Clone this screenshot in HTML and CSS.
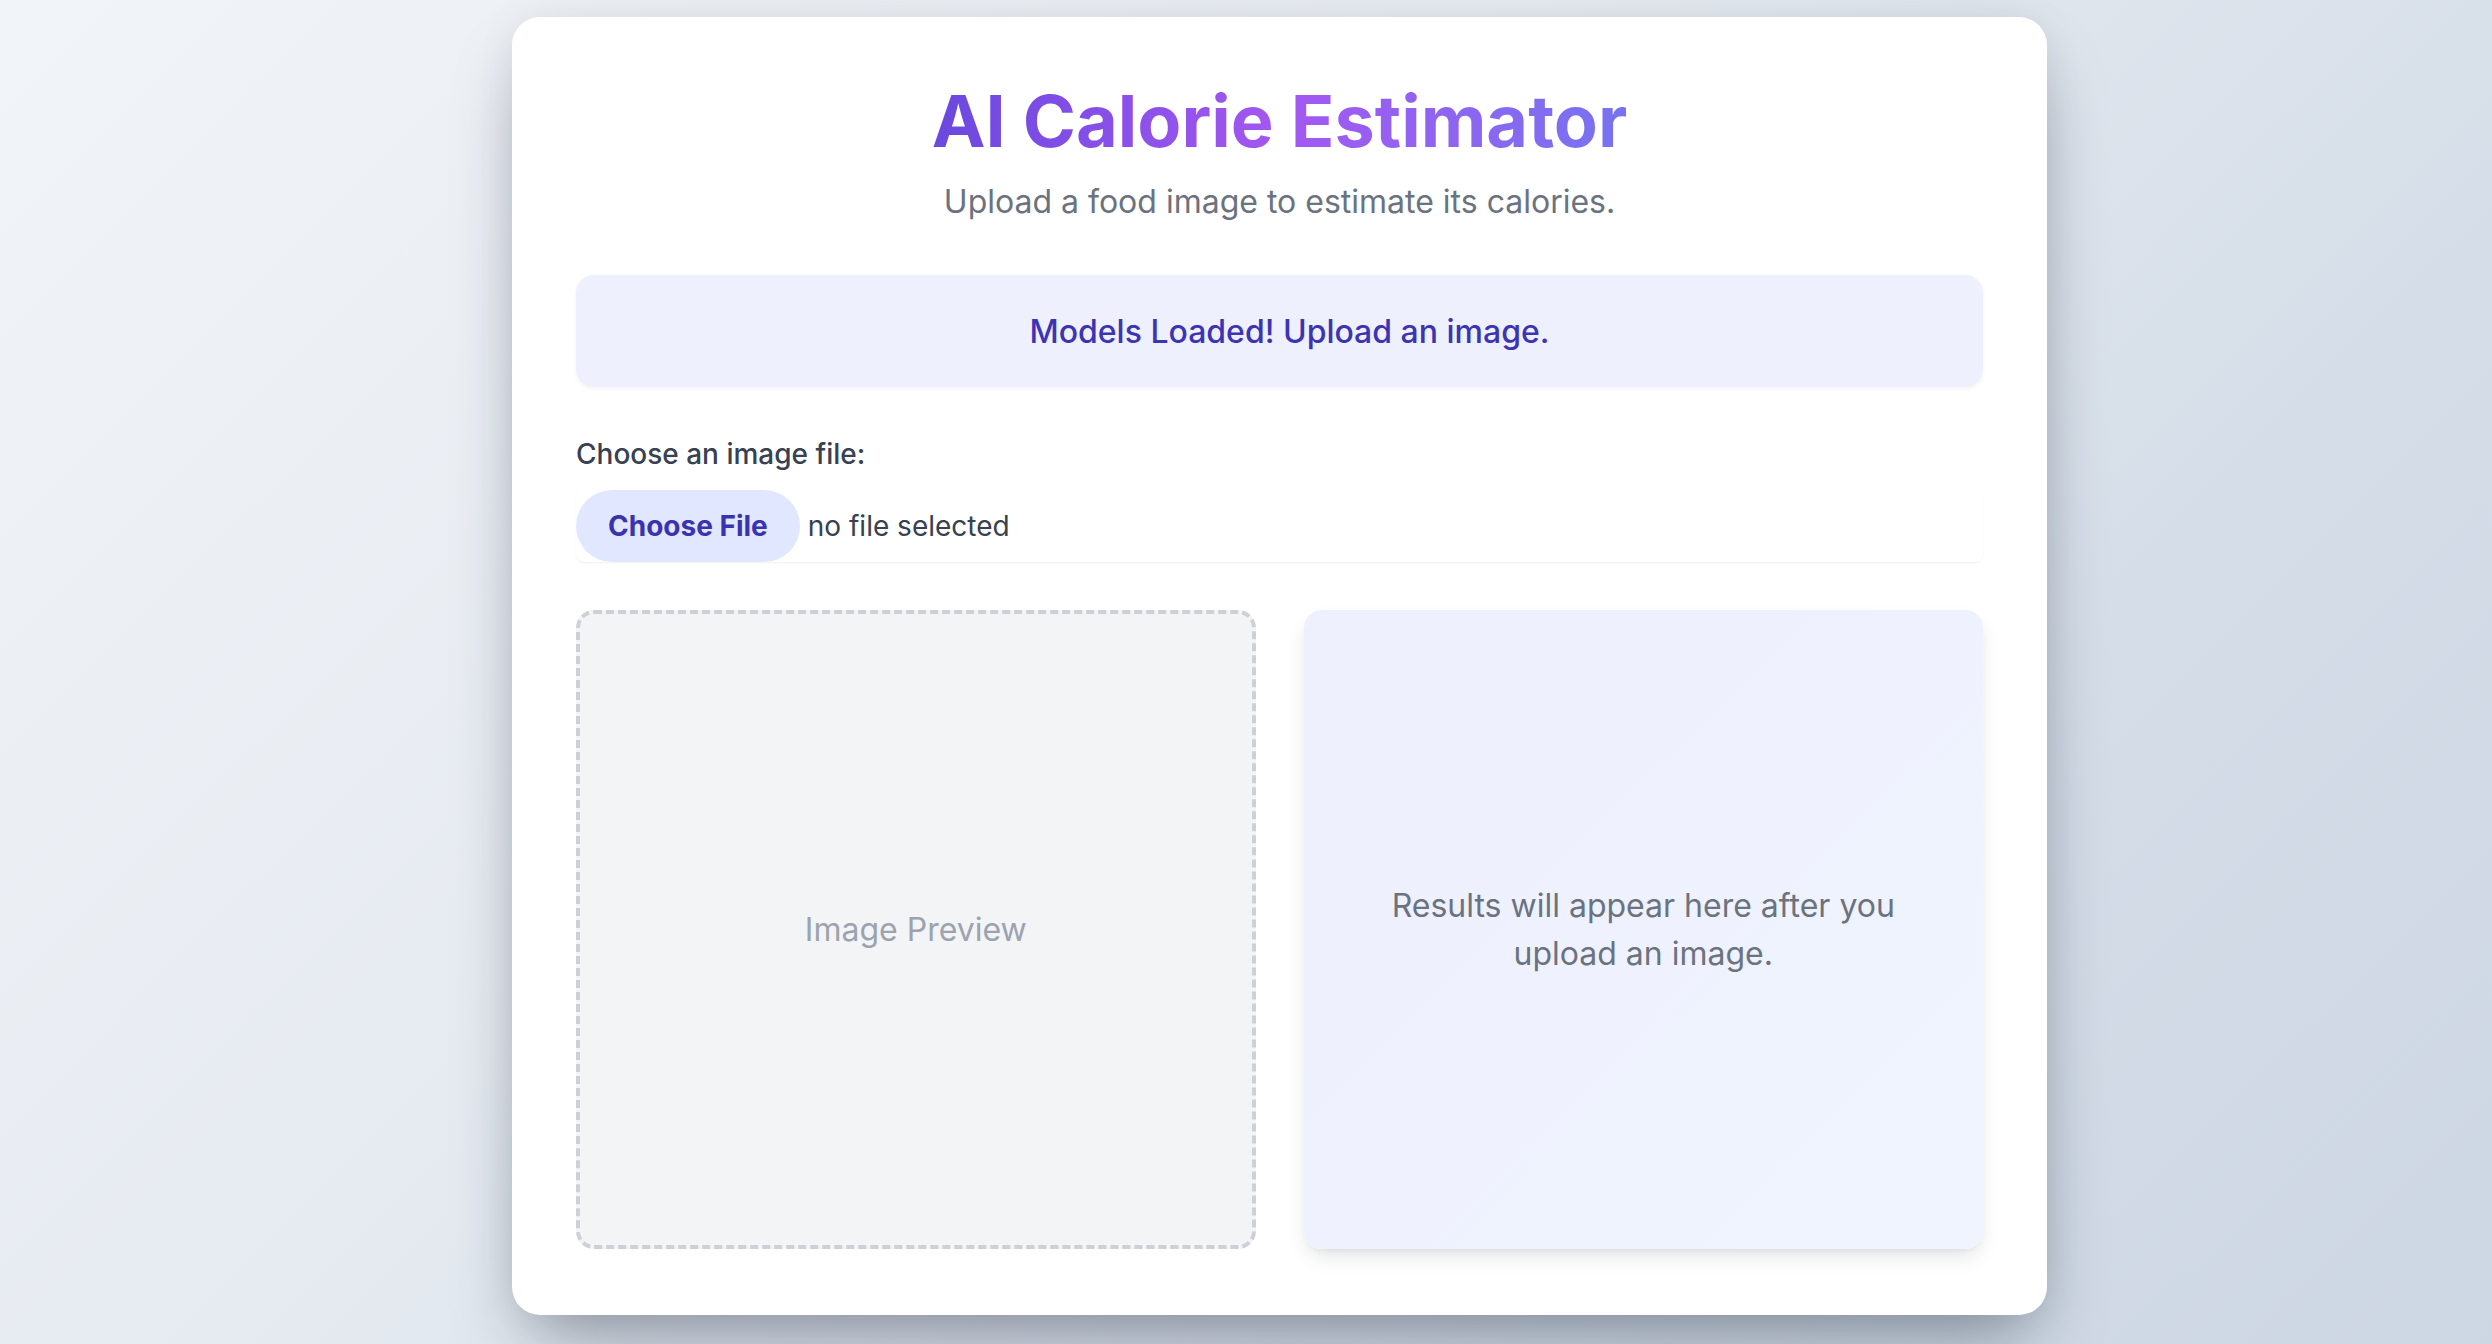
FILE: index.html
```html
<!DOCTYPE html>
<html lang="en">
<head>
<meta charset="utf-8">
<title>AI Calorie Estimator</title>
<link rel="stylesheet" href="styles.css">
</head>
<body>
<div class="page">
  <main class="card">
    <h1 class="title">AI Calorie Estimator</h1>
    <p class="subtitle">Upload a food image to estimate its calories.</p>

    <div class="status">Models Loaded! Upload an image.</div>

    <div class="field">
      <label class="field-label" for="file">Choose an image file:</label>
      <div class="file-input">
        <span class="file-btn">Choose File</span>
        <span class="file-name">no file selected</span>
      </div>
    </div>

    <div class="panels">
      <div class="preview">Image Preview</div>
      <div class="results">Results will appear here after you<br>upload an image.</div>
    </div>
  </main>
</div>
</body>
</html>
```
FILE: styles.css
```css
* { box-sizing: border-box; }

html, body {
  margin: 0;
  padding: 0;
}

body {
  min-height: 100vh;
  font-family: "Inter", "Noto Sans", "Liberation Sans", sans-serif;
  background: linear-gradient(135deg, #f1f4f8 0%, #e6ebf1 40%, #d3dce7 75%, #cdd7e3 100%);
  color: #374151;
}

.page {
  display: flex;
  justify-content: center;
  padding: 17px 0 17px 67px;
}

.card {
  width: 1535px;
  background: #ffffff;
  border-radius: 28px;
  padding: 64px 64px 66px;
  box-shadow: 0 38px 75px -18px rgba(15, 23, 42, 0.4), 0 0 40px rgba(15, 23, 42, 0.06);
}

.title {
  margin: 0 auto;
  width: fit-content;
  text-align: center;
  font-size: 72px;
  line-height: 80px;
  font-weight: 700;
  background: linear-gradient(90deg, #6a48df 0%, #a457f1 50%, #7773f0 100%);
  -webkit-background-clip: text;
  background-clip: text;
  color: transparent;
}

.subtitle {
  margin: 19px 0 0;
  text-align: center;
  font-size: 32px;
  line-height: 44px;
  color: #6b7280;
}

.status {
  margin-top: 51px;
  height: 112px;
  padding-left: 20px;
  display: flex;
  align-items: center;
  justify-content: center;
  background: #eef0fd;
  border-radius: 18px;
  box-shadow: 0 2px 4px rgba(15, 23, 42, 0.05);
  font-size: 32px;
  font-weight: 550;
  color: #3d34b4;
}

.field {
  margin-top: 47px;
}

.field-label {
  display: block;
  font-size: 28px;
  line-height: 40px;
  font-weight: 500;
  color: #374151;
}

.file-input {
  margin-top: 16px;
  display: flex;
  align-items: center;
  gap: 8px;
  background: #fff;
  border-radius: 8px;
  box-shadow: 0 1px 2px rgba(15, 23, 42, 0.06);
}

.file-btn {
  display: inline-flex;
  align-items: center;
  height: 72px;
  padding: 0 32px;
  border-radius: 36px;
  background: #e0e7ff;
  color: #3a33b0;
  font-size: 28px;
  font-weight: 700;
}

.file-name {
  font-size: 28px;
  color: #374151;
}

.panels {
  margin-top: 48px;
  display: grid;
  grid-template-columns: 1fr 1fr;
  gap: 48px;
}

.preview,
.results {
  height: 639px;
  border-radius: 18px;
  display: flex;
  align-items: center;
  justify-content: center;
  text-align: center;
  font-size: 32px;
  line-height: 48px;
}

.preview {
  background: #f3f4f6;
  border: 4px dashed #cdd1d7;
  color: #9ca3af;
}

.results {
  background: linear-gradient(135deg, #eef0fd 0%, #eff4fe 100%);
  color: #6b7280;
  box-shadow: 0 10px 22px -4px rgba(15, 23, 42, 0.12), 0 4px 8px -4px rgba(15, 23, 42, 0.08);
}
```
